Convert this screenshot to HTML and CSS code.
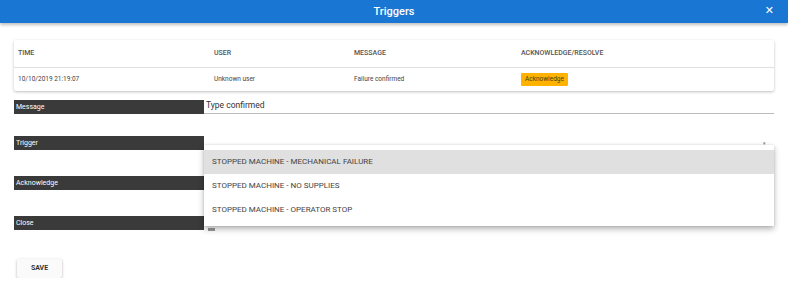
FILE: index.html
```html
<!DOCTYPE html>
<html lang="en">
<head>
    <meta charset="UTF-8">
    <meta name="viewport" content="width=device-width, initial-scale=1.0">
    <title>Triggers</title>
    <link rel="stylesheet" href="styles.css">
</head>
<body>

<header class="titlebar">
    <span class="title">Triggers</span>
    <button class="close-btn" type="button">&#x2715;</button>
</header>

<main class="content">
    <div class="card">
        <table class="alarm-table">
            <thead>
                <tr>
                    <th class="col-time">TIME</th>
                    <th class="col-user">USER</th>
                    <th class="col-msg">MESSAGE</th>
                    <th>ACKNOWLEDGE/RESOLVE</th>
                </tr>
            </thead>
            <tbody>
                <tr>
                    <td>10/10/2019 21:19:07</td>
                    <td>Unknown user</td>
                    <td>Failure confirmed</td>
                    <td><button class="ack-btn" type="button">Acknowledge</button></td>
                </tr>
            </tbody>
        </table>
    </div>

    <form class="trigger-form">
        <div class="field field-first">
            <label class="field-label">Message</label>
            <div class="field-input">
                <input class="text-input" type="text" value="Type confirmed">
            </div>
        </div>
        <div class="field">
            <label class="field-label">Trigger</label>
            <div class="field-input">
                <span class="select-arrow">&#9662;</span>
                <ul class="menu">
                    <li class="menu-item active">STOPPED MACHINE - MECHANICAL FAILURE</li>
                    <li class="menu-item">STOPPED MACHINE - NO SUPPLIES</li>
                    <li class="menu-item">STOPPED MACHINE - OPERATOR STOP</li>
                </ul>
            </div>
        </div>
        <div class="field">
            <label class="field-label">Acknowledge</label>
            <div class="field-input"></div>
        </div>
        <div class="field field-last">
            <label class="field-label">Close</label>
            <div class="field-input"><span class="check"></span></div>
        </div>
        <button class="save-btn" type="button">SAVE</button>
    </form>
</main>

</body>
</html>
```

FILE: styles.css
```css
* {
    margin: 0;
    padding: 0;
    box-sizing: border-box;
}

body {
    font-family: Roboto, 'Liberation Sans', sans-serif;
    background: #fff;
    color: #333;
}

/* title bar */
.titlebar {
    height: 23px;
    background: #1976d2;
    box-shadow: 0 2px 3px rgba(0, 0, 0, 0.25);
    display: flex;
    align-items: center;
    justify-content: center;
    position: relative;
}

.title {
    color: #fff;
    font-size: 11px;
    font-weight: 500;
}

.close-btn {
    position: absolute;
    right: 14px;
    top: 5px;
    background: none;
    border: none;
    color: #fff;
    font-size: 11px;
    line-height: 12px;
    font-family: 'DejaVu Sans', sans-serif;
}

.content {
    padding: 17px 14px 0 14px;
}

/* table card */
.card {
    background: #fff;
    box-shadow: 0 1px 3px rgba(0, 0, 0, 0.25);
    border-radius: 2px;
}

.alarm-table {
    width: 100%;
    border-collapse: collapse;
}

.alarm-table th {
    height: 27px;
    text-align: left;
    font-size: 7px;
    font-weight: 500;
    color: #555;
    padding-left: 4px;
    border-bottom: 1px solid #e0e0e0;
}

.alarm-table td {
    height: 24px;
    font-size: 6.5px;
    color: #444;
    padding-left: 4px;
}

.col-time { width: 196px; }
.col-user { width: 140px; }
.col-msg { width: 167px; }

.ack-btn {
    background: #ffb300;
    border: none;
    border-radius: 1px;
    color: #4a3a10;
    font-family: inherit;
    font-size: 6.5px;
    height: 13px;
    padding: 0 4px;
}

/* form */
.trigger-form {
    margin-top: 9px;
}

.field {
    display: flex;
    height: 40px;
}

.field-first {
    height: 36px;
}

.field-last {
    height: 39px;
}

.field-label {
    width: 190px;
    height: 14px;
    background: #3a3a3a;
    color: #fff;
    font-size: 7px;
    line-height: 14px;
    padding-left: 2px;
    flex-shrink: 0;
}

.field-input {
    flex: 1;
    position: relative;
}

.text-input {
    display: block;
    width: 100%;
    border: none;
    border-bottom: 1px solid #bbb;
    font-family: inherit;
    font-size: 8.5px;
    color: #333;
    height: 14px;
    padding: 0 2px 4px 2px;
    outline: none;
}

.select-arrow {
    position: absolute;
    right: 8px;
    top: 4px;
    font-size: 5px;
    color: #888;
}

.menu {
    list-style: none;
    position: absolute;
    left: 0;
    right: 0;
    top: 9px;
    background: #fff;
    padding: 5px 0 4px 0;
    box-shadow: 0 3px 6px rgba(0, 0, 0, 0.3), 0 0 2px rgba(0, 0, 0, 0.12);
    z-index: 2;
}

.menu-item {
    height: 24px;
    line-height: 24px;
    padding-left: 8px;
    font-size: 8px;
    color: #444;
}

.menu-item.active {
    background: #e0e0e0;
}

.check {
    display: inline-block;
    width: 7px;
    height: 3px;
    background: #999;
    margin: 9px 0 0 4px;
}

.save-btn {
    margin-left: 3px;
    width: 45px;
    height: 19px;
    background: #fafafa;
    border: none;
    border-radius: 2px;
    box-shadow: 0 1px 3px rgba(0, 0, 0, 0.3);
    font-family: inherit;
    font-weight: 700;
    font-size: 7px;
    color: #333;
}
```
